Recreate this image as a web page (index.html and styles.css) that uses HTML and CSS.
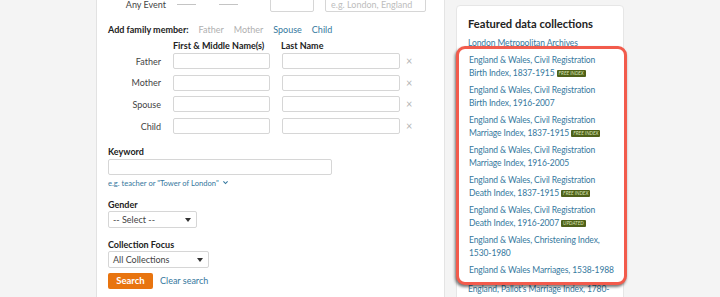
FILE: index.html
```html
<!DOCTYPE html>
<html lang="en">
<head>
    <meta charset="UTF-8">
    <meta name="viewport" content="width=device-width, initial-scale=1.0">
    <title>Search Records</title>
    <link rel="stylesheet" href="styles.css">
</head>
<body>
    <div class="page">
        <div class="rail"></div>

        <main class="search-form">
            <div class="event-row">
                <span class="event-label">Any Event</span>
                <span class="dash"></span>
                <span class="dash dash-to"></span>
                <input class="field field-year" type="text">
                <input class="field field-place" type="text" placeholder="e.g. London, England">
            </div>

            <div class="add-family">
                <strong>Add family member:</strong>
                <span class="member off">Father</span>
                <span class="member off">Mother</span>
                <a href="#" class="member">Spouse</a>
                <a href="#" class="member">Child</a>
            </div>

            <div class="family-head">
                <span class="col-first">First &amp; Middle Name(s)</span>
                <span class="col-last">Last Name</span>
            </div>

            <div class="family-grid">
                <label class="family-label">Father</label>
                <input class="field" type="text">
                <input class="field" type="text">
                <span class="remove">&times;</span>

                <label class="family-label">Mother</label>
                <input class="field" type="text">
                <input class="field" type="text">
                <span class="remove">&times;</span>

                <label class="family-label">Spouse</label>
                <input class="field" type="text">
                <input class="field" type="text">
                <span class="remove">&times;</span>

                <label class="family-label">Child</label>
                <input class="field" type="text">
                <input class="field" type="text">
                <span class="remove">&times;</span>
            </div>

            <div class="group group-keyword">
                <label class="group-label">Keyword</label>
                <input class="field field-keyword" type="text">
                <a href="#" class="hint">e.g. teacher or "Tower of London"
                    <svg class="chevron" viewBox="0 0 10 10"><path d="M2 3.5 5 6.5 8 3.5"/></svg>
                </a>
            </div>

            <div class="group">
                <label class="group-label">Gender</label>
                <div class="select select-gender">-- Select --</div>
            </div>

            <div class="group">
                <label class="group-label">Collection Focus</label>
                <div class="select select-focus">All Collections</div>
            </div>

            <div class="actions">
                <button class="search-btn">Search</button>
                <a href="#" class="clear-link">Clear search</a>
            </div>
        </main>

        <aside class="sidebar">
            <div class="featured">
                <h3 class="featured-title">Featured data collections</h3>
                <ul class="collections">
                    <li><a href="#">London Metropolitan Archives</a></li>
                </ul>
                <ul class="collections highlight">
                    <li><a href="#">England &amp; Wales, Civil Registration Birth Index, 1837-1915</a> <span class="badge">FREE INDEX</span></li>
                    <li><a href="#">England &amp; Wales, Civil Registration Birth Index, 1916-2007</a></li>
                    <li><a href="#">England &amp; Wales, Civil Registration Marriage Index, 1837-1915</a> <span class="badge">FREE INDEX</span></li>
                    <li><a href="#">England &amp; Wales, Civil Registration Marriage Index, 1916-2005</a></li>
                    <li><a href="#">England &amp; Wales, Civil Registration Death Index, 1837-1915</a> <span class="badge">FREE INDEX</span></li>
                    <li><a href="#">England &amp; Wales, Civil Registration Death Index, 1916-2007</a> <span class="badge">UPDATED</span></li>
                    <li><a href="#">England &amp; Wales, Christening Index, 1530-1980</a></li>
                    <li><a href="#">England &amp; Wales Marriages, 1538-1988</a></li>
                </ul>
                <ul class="collections after-highlight">
                    <li><a href="#">England, Pallot's Marriage Index, 1780-1837</a></li>
                </ul>
            </div>
        </aside>
    </div>
</body>
</html>
```

FILE: styles.css
```css
* {
    margin: 0;
    padding: 0;
    box-sizing: border-box;
}

body {
    font-family: 'Lato', 'Liberation Sans', sans-serif;
    font-size: 9px;
    color: #333;
    background: #f4f4f4;
    height: 297px;
    overflow: hidden;
}

a {
    color: #35789e;
    text-decoration: none;
}

.page {
    display: flex;
    height: 100%;
}

/* Left rail */
.rail {
    width: 97px;
    flex-shrink: 0;
    border-right: 1px solid #e2e2e2;
}

/* Search form */
.search-form {
    width: 348px;
    flex-shrink: 0;
    background: #fff;
    border-right: 1px solid #e4e4e4;
    padding: 0 0 0 11px;
}

.field {
    display: block;
    height: 16px;
    border: 1px solid #d6d6d6;
    border-radius: 2px;
    background: #fff;
    font-family: inherit;
    font-size: 9px;
    padding: 0 5px;
    color: #333;
}

.field::placeholder {
    color: #bdbdbd;
}

.event-row {
    display: flex;
    align-items: center;
    height: 16px;
    margin-top: -4px;
}

.event-label {
    width: 58px;
    text-align: right;
    color: #444;
}

.dash {
    width: 19px;
    border-top: 1px solid #c4c4c4;
    margin-left: 11px;
}

.dash-to {
    margin-left: 23px;
}

.field-year {
    width: 44px;
    margin-left: 32px;
}

.field-place {
    width: 101px;
    margin-left: 11px;
}

.add-family {
    display: flex;
    gap: 10px;
    margin-top: 12px;
    line-height: 12px;
    font-size: 9px;
}

.add-family strong {
    color: #222;
}

.member.off {
    color: #b0b0b0;
}

.family-head {
    display: flex;
    margin-top: 4px;
    margin-bottom: 1px;
    line-height: 12px;
    font-weight: 700;
    color: #222;
}

.col-first {
    margin-left: 65px;
    width: 108px;
}

.family-grid {
    display: grid;
    grid-template-columns: 53px 97px 118px 10px;
    grid-auto-rows: 16px;
    column-gap: 12px;
    row-gap: 5.7px;
    align-items: center;
}

.family-label {
    text-align: right;
    color: #444;
}

.family-grid .field {
    width: 100%;
}

.remove {
    margin-left: -6px;
    color: #b4b4b4;
    font-size: 11px;
    line-height: 16px;
}

/* Field groups */
.group {
    margin-top: 11px;
}

.group-label {
    display: block;
    line-height: 12px;
    font-weight: 700;
    color: #222;
}

.group-keyword {
    margin-top: 11.5px;
}

.field-keyword {
    width: 224px;
    margin-top: 1px;
}

.hint {
    display: flex;
    align-items: center;
    gap: 3px;
    margin-top: 3px;
    line-height: 10px;
    font-size: 7.6px;
}

.chevron {
    width: 7px;
    height: 7px;
    fill: none;
    stroke: currentColor;
    stroke-width: 1.6;
}

.select {
    position: relative;
    height: 17px;
    line-height: 15px;
    border: 1px solid #d6d6d6;
    border-radius: 2px;
    padding-left: 4px;
    color: #444;
}

.select::after {
    content: '';
    position: absolute;
    right: 5px;
    top: 6px;
    border-left: 3px solid transparent;
    border-right: 3px solid transparent;
    border-top: 4px solid #333;
}

.select-gender {
    width: 89px;
}

.select-focus {
    width: 101px;
}

.actions {
    display: flex;
    align-items: center;
    gap: 7px;
    margin-top: 5px;
}

.search-btn {
    width: 45px;
    height: 16px;
    background: #e8740f;
    color: #fff;
    border: none;
    border-radius: 2px;
    font-family: inherit;
    font-size: 9.5px;
    font-weight: 700;
}

/* Featured collections */
.sidebar {
    flex: 1;
    padding: 5px 0 0 11px;
}

.featured {
    width: 168px;
    height: 320px;
    background: #fff;
    border: 1px solid #e6e6e6;
    border-radius: 4px;
    padding: 11px 12px 0 11px;
}

.featured-title {
    font-size: 11.2px;
    line-height: 14px;
    color: #222;
    margin-bottom: 6px;
}

.collections {
    list-style: none;
    line-height: 13px;
    font-size: 8.5px;
    letter-spacing: -0.1px;
}

.collections li {
    margin-bottom: 4px;
}

.highlight {
    position: relative;
    margin: -8px -16px 0 -12px;
    padding: 5px 10px 1px 10px;
    background: #fff;
    border: 3px solid #f25b4c;
    border-radius: 9px;
    box-shadow: -1px 2px 3px rgba(0, 0, 0, 0.55);
}

.after-highlight {
    margin-top: -2px;
}

.badge {
    display: inline-block;
    vertical-align: 1px;
    background: #4f6119;
    color: #d9e3b4;
    font-size: 4.8px;
    font-style: italic;
    letter-spacing: 0;
    line-height: 7px;
    padding: 0 2px;
    border-radius: 1px;
}
```
